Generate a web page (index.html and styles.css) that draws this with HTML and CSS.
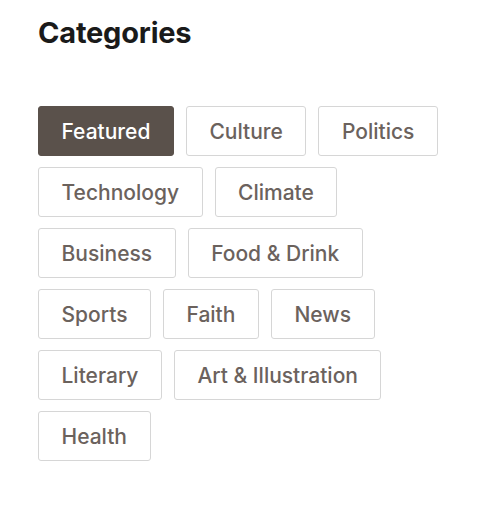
FILE: index.html
```html
<!DOCTYPE html>
<html>
<head>
<meta charset="utf-8">
<link rel="stylesheet" href="styles.css">
</head>
<body>
<section class="categories">
  <h2 class="title">Categories</h2>
  <ul class="tags">
    <li class="tag active">Featured</li>
    <li class="tag">Culture</li>
    <li class="tag">Politics</li>
    <li class="tag">Technology</li>
    <li class="tag">Climate</li>
    <li class="tag">Business</li>
    <li class="tag">Food &amp; Drink</li>
    <li class="tag">Sports</li>
    <li class="tag">Faith</li>
    <li class="tag">News</li>
    <li class="tag">Literary</li>
    <li class="tag">Art &amp; Illustration</li>
    <li class="tag">Health</li>
  </ul>
</section>
</body>
</html>
```
FILE: styles.css
```css
html, body {
  margin: 0;
  padding: 0;
  background: #ffffff;
}
body {
  font-family: Inter, "Open Sans", sans-serif;
}
.categories {
  padding: 16px 38px;
  width: 410px;
}
.title {
  margin: 0;
  font-size: 29px;
  font-weight: 700;
  color: #1a1a1a;
  line-height: 34px;
  letter-spacing: -0.2px;
}
.tags {
  list-style: none;
  margin: 56px 0 0 0;
  padding: 0;
  display: flex;
  flex-wrap: wrap;
  gap: 11px 12px;
}
.tag {
  box-sizing: border-box;
  height: 50px;
  padding: 0 22.5px;
  display: flex;
  align-items: center;
  border: 1px solid #d6d6d6;
  border-radius: 3px;
  font-size: 21px;
  font-weight: 500;
  color: #6b625d;
}
.tag.active {
  background: #5a514b;
  border-color: #5a514b;
  color: #ffffff;
}
```
